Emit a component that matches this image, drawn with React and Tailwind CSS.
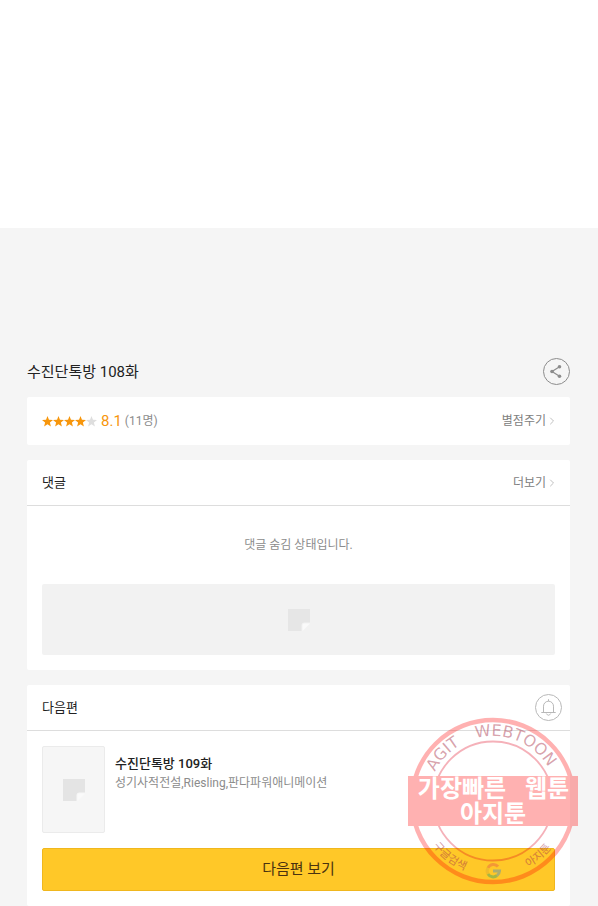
import React from 'react';
import { ChevronRight } from 'lucide-react';

const STAR = 'M6 0 L7.6 4 L12 4.3 L8.6 7.1 L9.7 11.4 L6 9.1 L2.3 11.4 L3.4 7.1 L0 4.3 L4.4 4 Z';

function Stars({ value }) {
  return (
    <span className="flex" role="img" aria-label={`${value} / 5`}>
      {[1, 2, 3, 4, 5].map((n) => (
        <svg key={n} viewBox="0 0 12 12" className={`h-[11px] w-[11px] ${n <= value ? 'fill-[#f7960c]' : 'fill-[#dedede]'}`}>
          <path d={STAR} />
        </svg>
      ))}
    </span>
  );
}

function NoteIcon({ className }) {
  return (
    <svg viewBox="0 0 22 22" className={`h-[22px] w-[22px] ${className}`} fill="currentColor">
      <path d="M0 0H22V13.5H16.5Q13.5 13.5 13.5 16.5V22H0Z" />
      <path d="M22 14.5L14.5 22V16.5Q14.5 14.5 16.5 14.5Z" fill="#fafafa" />
    </svg>
  );
}

function ShareIcon() {
  return (
    <svg viewBox="0 0 27 27" className="h-[27px] w-[27px]" fill="none" stroke="#8c8c8c">
      <circle cx="13.5" cy="13.5" r="13" />
      <path d="M16.5 8.7L9 13.5L16.5 18.3" strokeWidth="1.2" />
      <g fill="#8c8c8c" stroke="none">
        <circle cx="16.5" cy="8.7" r="1.8" />
        <circle cx="9" cy="13.5" r="1.8" />
        <circle cx="16.5" cy="18.3" r="1.8" />
      </g>
    </svg>
  );
}

function BellIcon() {
  return (
    <svg viewBox="0 0 27 27" className="h-[27px] w-[27px]" fill="none" stroke="#b8b8b8">
      <circle cx="13.5" cy="13.5" r="13" />
      <path d="M8.5 18.5V12.2a5 5 0 0 1 10 0V18.5M6.3 18.5H20.7M13.5 7.2V5.2M11.3 19.5Q13.5 23 15.7 19.5" />
    </svg>
  );
}

function Stamp() {
  return (
    <svg
      viewBox="0 0 170 168"
      className="pointer-events-none absolute top-8 -right-2 h-[168px] w-[170px]"
      role="img"
      aria-label="가장빠른 웹툰 아지툰"
    >
      <defs>
        <path id="ring-top" d="M20 84A65 65 0 0 1 150 84" />
        <path id="ring-bottom" d="M10 84A75 75 0 0 0 160 84" />
      </defs>
      <g opacity="0.3">
        <circle cx="85" cy="84" r="81" fill="none" stroke="#ff0000" strokeWidth="4.5" />
        <circle cx="85" cy="84" r="59.5" fill="none" stroke="#e0001c" strokeWidth="1.8" />
        <rect y="59" width="170" height="50" fill="#ff0000" />
      </g>
      <g fill="#a83048" fillOpacity="0.45" textAnchor="middle">
        <g fontSize="16" className="font-['DejaVu_Sans',sans-serif]">
          <text>
            <textPath href="#ring-top" startOffset="24%">AGIT</textPath>
          </text>
          <text>
            <textPath href="#ring-top" startOffset="62%">WEBTOON</textPath>
          </text>
        </g>
        <g fontSize="11" className="font-['Noto_Sans_CJK_KR',sans-serif] font-medium">
          <text>
            <textPath href="#ring-bottom" startOffset="29%">구글검색</textPath>
          </text>
          <text>
            <textPath href="#ring-bottom" startOffset="72%">아지툰</textPath>
          </text>
        </g>
      </g>
      <g fill="#ffffff" fontSize="24" textAnchor="middle" className="font-['Noto_Sans_CJK_KR',sans-serif] font-bold">
        <text x="54" y="80">가장빠른</text>
        <text x="139" y="80">웹툰</text>
        <text x="85" y="105">아지툰</text>
      </g>
      <g fill="none" strokeWidth="3" opacity="0.5">
        <path d="M90 149.5A6 6 0 0 0 80 151" stroke="#ea6a45" />
        <path d="M80 151A6 6 0 0 0 80 157" stroke="#e0b030" />
        <path d="M80 157A6 6 0 0 0 89 158.5" stroke="#4ca860" />
        <path d="M89 158.5A6 6 0 0 0 91.5 154H85" stroke="#5b93b8" />
      </g>
    </svg>
  );
}

function MoreLink({ children }) {
  return (
    <a href="#" className="flex items-center text-xs text-[#808080]">
      {children}
      <ChevronRight className="-mr-[3px] h-3 w-3 text-[#c0c0c0]" strokeWidth={2} />
    </a>
  );
}

export default function App() {
  return (
    <div className="min-h-screen bg-[#f5f5f5] font-['Roboto','Noto_Sans_CJK_KR',sans-serif] text-[#222222]">
      <div className="h-[228px] bg-white" />

      <main className="pt-[130px] pr-7 pl-[27px]">
        <div className="mb-3 flex items-center justify-between">
          <h1 className="text-[15px] leading-5">수진단톡방 108화</h1>
          <button type="button" aria-label="공유">
            <ShareIcon />
          </button>
        </div>

        <section className="mb-[15px] flex h-12 items-center justify-between rounded-xs bg-white px-[15px]">
          <div className="flex items-center">
            <Stars value={4} />
            <strong className="ml-1 text-[15px] font-normal text-[#f7960c]">8.1</strong>
            <span className="ml-[3px] text-xs text-[#8c8c8c]">(11명)</span>
          </div>
          <MoreLink>별점주기</MoreLink>
        </section>

        <section className="mb-[15px] rounded-xs bg-white">
          <header className="flex h-[46px] items-center justify-between border-b border-[#dddddd] px-[15px]">
            <h2 className="text-[13px]">댓글</h2>
            <MoreLink>더보기</MoreLink>
          </header>
          <div className="px-[15px] pb-[15px]">
            <p className="py-[30px] text-center text-xs leading-[18px] text-[#8c8c8c]">댓글 숨김 상태입니다.</p>
            <div className="flex h-[71px] items-center justify-center rounded-xs bg-[#f2f2f2]">
              <NoteIcon className="text-[#e6e6e6]" />
            </div>
          </div>
        </section>

        <section className="relative rounded-xs bg-white">
          <header className="flex h-[46px] items-center justify-between border-b border-[#dddddd] pr-2 pl-[15px]">
            <h2 className="text-[13px]">다음편</h2>
            <button type="button" aria-label="알림">
              <BellIcon />
            </button>
          </header>
          <div className="p-[15px]">
            <a href="#" className="mb-[15px] flex gap-[10px]">
              <span className="flex h-[87px] w-[63px] items-center justify-center rounded-xs border border-[#ebebeb] bg-[#f6f6f6]">
                <NoteIcon className="text-[#e4e4e4]" />
              </span>
              <span className="pt-2">
                <strong className="block text-[13px] leading-5 font-medium">수진단톡방 109화</strong>
                <span className="block text-xs leading-[18px] text-[#8c8c8c]">성기사적전설,Riesling,판다파워애니메이션</span>
              </span>
            </a>
            <button
              type="button"
              className="block h-[43px] w-full rounded-xs border border-[#f0b71e] bg-[#ffc828] text-[15px] text-[#4a3210]"
            >
              다음편 보기
            </button>
          </div>
          <Stamp />
        </section>
      </main>
    </div>
  );
}
